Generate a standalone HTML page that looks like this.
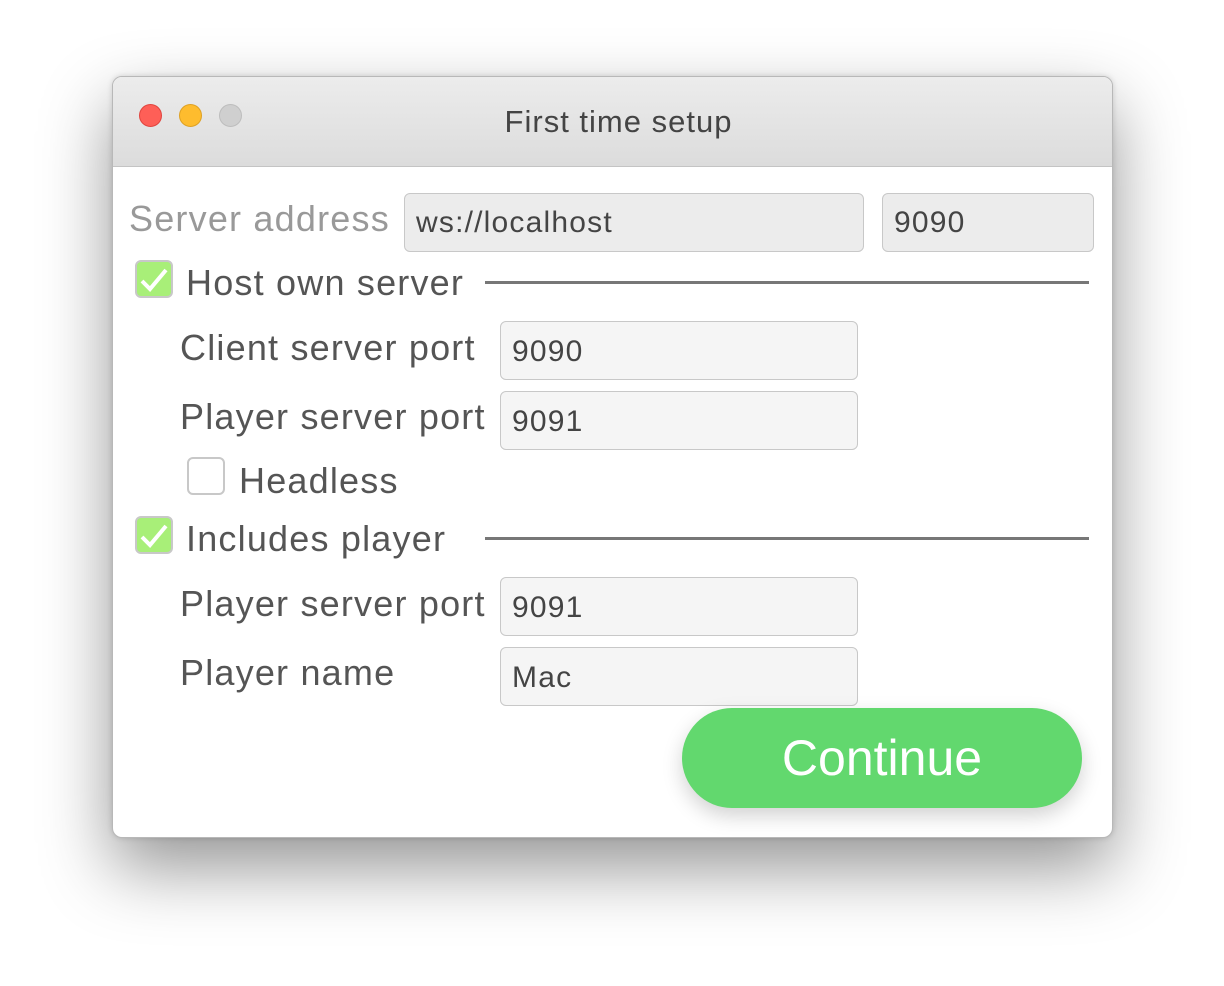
<!DOCTYPE html>
<html><head><style>
body{margin:0;width:1224px;height:986px;background:#fff;position:relative;overflow:hidden;font-family:"Liberation Sans",sans-serif}
.win{position:absolute;left:112px;top:76px;width:999px;height:760px;border:1px solid #b8b8b8;border-radius:10px;background:#fff;box-shadow:0 30px 70px rgba(0,0,0,.42),0 0 6px rgba(0,0,0,.15);overflow:hidden}
.tb{position:absolute;left:0;top:0;width:100%;height:89px;background:linear-gradient(#ececec,#dcdcdc);border-bottom:1px solid #c4c4c4}
.dot{position:absolute;top:27px;width:23px;height:23px;border-radius:50%}
.t{position:absolute;line-height:1;white-space:nowrap;color:#555;font-size:36px;letter-spacing:1.2px}
.in{position:absolute;border:1.5px solid #c8c8c8;border-radius:6px;background:#f5f5f5;box-sizing:border-box;font-size:30px;letter-spacing:1.2px;color:#444;line-height:1;padding-left:11px}
.cb{position:absolute;width:38px;height:38px;box-sizing:border-box;border:2px solid #c8c8c8;border-radius:6px;background:#a8ef78}
.ln{position:absolute;height:3px;background:#777}
</style></head><body>
<div class="win">
<div class="tb">
<div class="dot" style="left:26px;background:#fe5f57;border:1px solid #e0443e;box-sizing:border-box"></div>
<div class="dot" style="left:66px;background:#febc2e;border:1px solid #dea123;box-sizing:border-box"></div>
<div class="dot" style="left:106px;background:#cfcfcf;border:1px solid #bdbdbd;box-sizing:border-box"></div>
<div class="t" style="left:0;width:100%;text-align:center;top:29px;font-size:31px;letter-spacing:1px;color:#444;padding-left:6px">First time setup</div>
</div>
</div>
<div class="t" style="left:129px;top:201px;color:#999">Server address</div>
<div class="in" style="left:404px;top:193px;width:460px;height:59px;background:#ececec;padding-top:14px">ws://localhost</div>
<div class="in" style="left:882px;top:193px;width:212px;height:59px;background:#ececec;padding-top:14px">9090</div>
<div class="cb" style="left:135px;top:260px"><svg width="34" height="34" viewBox="0 0 34 34"><path d="M5 19 L13 27 L29 8" fill="none" stroke="#fff" stroke-width="4"/></svg></div>
<div class="t" style="left:186px;top:265px">Host own server</div>
<div class="ln" style="left:485px;top:281px;width:604px"></div>
<div class="t" style="left:180px;top:330px">Client server port</div>
<div class="in" style="left:500px;top:321px;width:358px;height:59px;padding-top:15px">9090</div>
<div class="t" style="left:180px;top:399px">Player server port</div>
<div class="in" style="left:500px;top:391px;width:358px;height:59px;padding-top:15px">9091</div>
<div class="cb" style="left:187px;top:457px;background:#fff"></div>
<div class="t" style="left:239px;top:463px">Headless</div>
<div class="cb" style="left:135px;top:516px"><svg width="34" height="34" viewBox="0 0 34 34"><path d="M5 19 L13 27 L29 8" fill="none" stroke="#fff" stroke-width="4"/></svg></div>
<div class="t" style="left:186px;top:521px">Includes player</div>
<div class="ln" style="left:485px;top:537px;width:604px"></div>
<div class="t" style="left:180px;top:586px">Player server port</div>
<div class="in" style="left:500px;top:577px;width:358px;height:59px;padding-top:15px">9091</div>
<div class="t" style="left:180px;top:655px">Player name</div>
<div class="in" style="left:500px;top:647px;width:358px;height:59px;padding-top:15px">Mac</div>
<div style="position:absolute;left:682px;top:708px;width:400px;height:100px;border-radius:50px;background:#62d86e;box-shadow:0 8px 20px rgba(0,0,0,.18);color:#fff;font-size:50px;text-align:center;line-height:100px">Continue</div>
</body></html>
